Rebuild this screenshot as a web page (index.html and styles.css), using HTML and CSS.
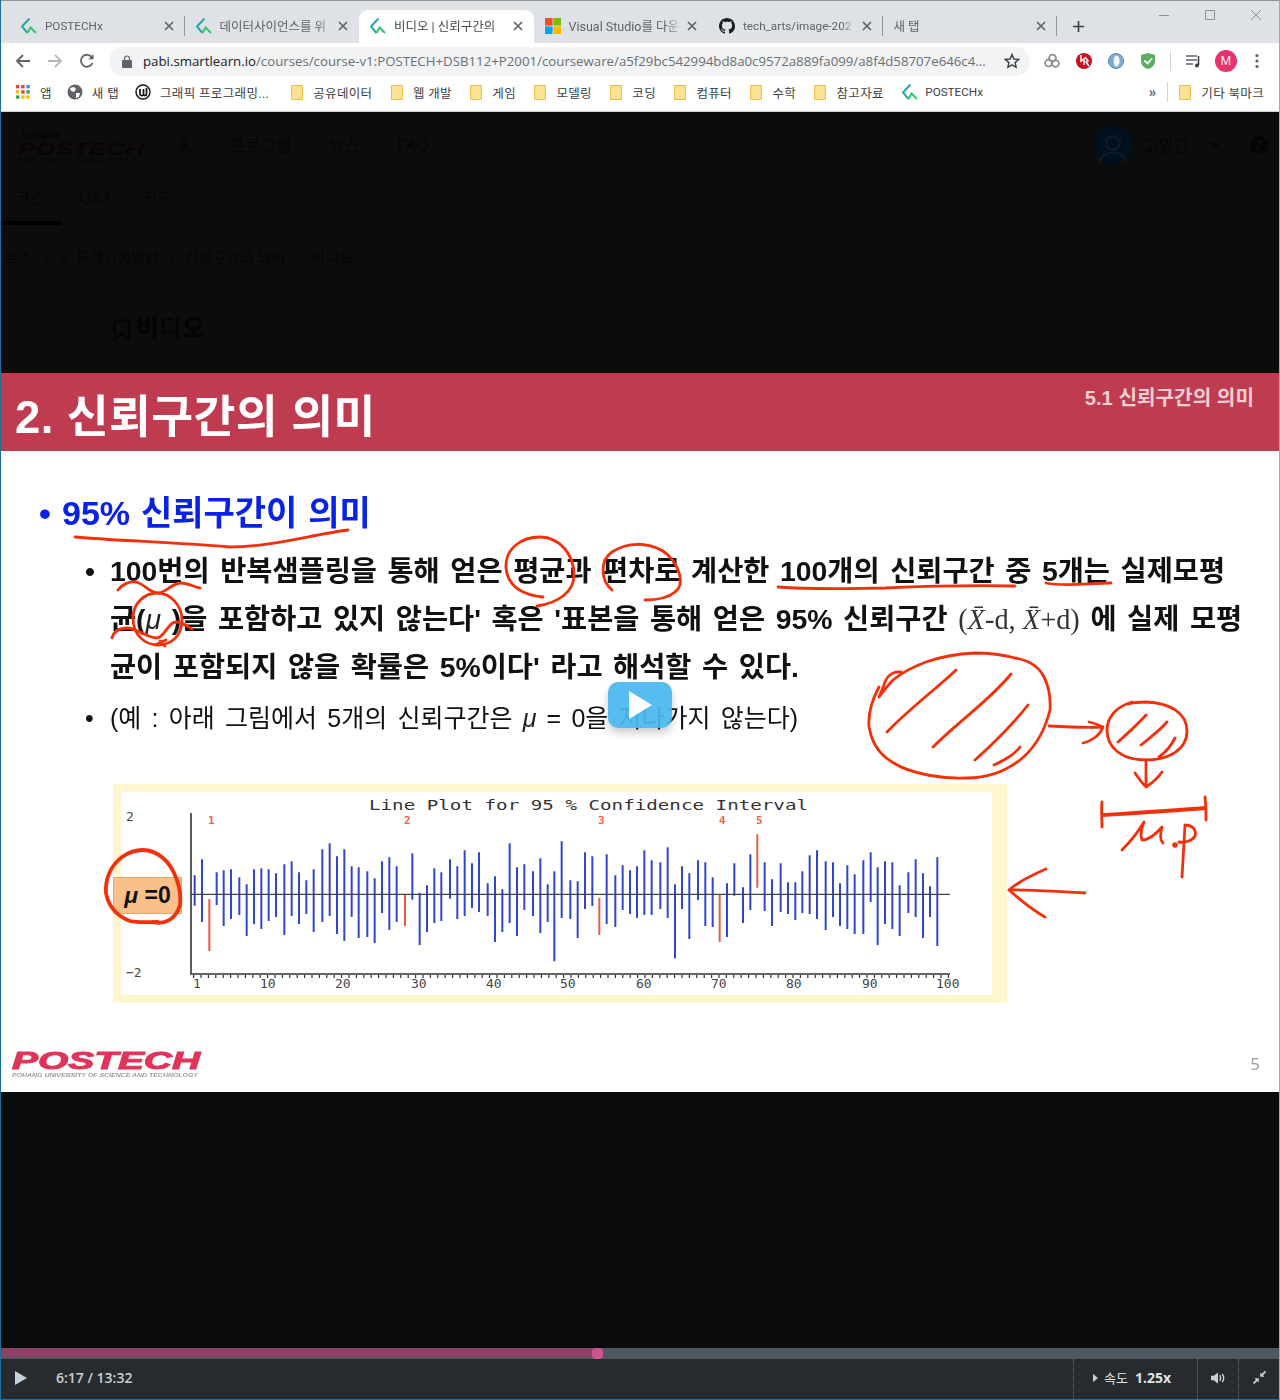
FILE: index.html
```html
<!DOCTYPE html>
<html lang="ko">
<head>
    <meta charset="UTF-8">
    <title>비디오 | 신뢰구간의 의미</title>
    <link rel="stylesheet" href="styles.css">
</head>
<body>

<svg class="defs" width="0" height="0">
    <symbol id="px" viewBox="0 0 16 16">
        <path d="M8.5 .5 1 8.5 6.5 15" fill="none" stroke="#2aa7a4" stroke-width="2"/>
        <path d="M6.5 15 9.5 9.5 15 15" fill="none" stroke="#35c66f" stroke-width="2"/>
    </symbol>
    <symbol id="folder" viewBox="0 0 12 15">
        <path d="M.5.5H11.5V14.5H.5Z" fill="#fde293" stroke="#e5c04d"/>
    </symbol>
    <symbol id="x" viewBox="0 0 10 10">
        <path d="M1 1 9 9M9 1 1 9" stroke="#5f6368" stroke-width="1.7"/>
    </symbol>
</svg>

<header class="chrome">
    <div class="tabstrip">
        <div class="tab">
            <svg class="favicon"><use href="#px"/></svg>
            <span class="tab-title latin">POSTECHx</span>
            <svg class="tab-x"><use href="#x"/></svg>
        </div>
        <div class="tab">
            <svg class="favicon"><use href="#px"/></svg>
            <span class="tab-title">데이터사이언스를 위</span>
            <svg class="tab-x"><use href="#x"/></svg>
        </div>
        <div class="tab active">
            <svg class="favicon"><use href="#px"/></svg>
            <span class="tab-title">비디오 | 신뢰구간의</span>
            <svg class="tab-x"><use href="#x"/></svg>
        </div>
        <div class="tab no-sep">
            <svg class="favicon" viewBox="0 0 16 16">
                <rect width="7.6" height="7.6" fill="#f25022"/>
                <rect x="8.4" width="7.6" height="7.6" fill="#7fba00"/>
                <rect y="8.4" width="7.6" height="7.6" fill="#00a4ef"/>
                <rect x="8.4" y="8.4" width="7.6" height="7.6" fill="#ffb900"/>
            </svg>
            <span class="tab-title">Visual Studio를 다운</span>
            <svg class="tab-x"><use href="#x"/></svg>
        </div>
        <div class="tab">
            <svg class="favicon" viewBox="0 0 16 16">
                <path fill="#1b1f23" d="M8 0C3.58 0 0 3.58 0 8c0 3.54 2.29 6.53 5.47 7.59.4.07.55-.17.55-.38 0-.19-.01-.82-.01-1.49-2.01.37-2.53-.49-2.69-.94-.09-.23-.48-.94-.82-1.13-.28-.15-.68-.52-.01-.53.63-.01 1.08.58 1.23.82.72 1.21 1.87.87 2.33.66.07-.52.28-.87.51-1.07-1.78-.2-3.64-.89-3.64-3.95 0-.87.31-1.59.82-2.15-.08-.2-.36-1.02.08-2.12 0 0 .67-.21 2.2.82.64-.18 1.32-.27 2-.27.68 0 1.36.09 2 .27 1.53-1.04 2.2-.82 2.2-.82.44 1.1.16 1.92.08 2.12.51.56.82 1.27.82 2.15 0 3.07-1.87 3.75-3.65 3.95.29.25.54.73.54 1.48 0 1.07-.01 1.93-.01 2.2 0 .21.15.46.55.38A8.013 8.013 0 0016 8c0-4.42-3.58-8-8-8z"/>
            </svg>
            <span class="tab-title latin">tech_arts/image-202</span>
            <svg class="tab-x"><use href="#x"/></svg>
        </div>
        <div class="tab last">
            <span class="tab-title">새 탭</span>
            <svg class="tab-x"><use href="#x"/></svg>
        </div>
        <svg class="new-tab" viewBox="0 0 14 14"><path d="M7 1V13M1 7H13" stroke="#3c4043" stroke-width="1.8"/></svg>
        <div class="win-controls">
            <svg viewBox="0 0 12 12"><path d="M1 6.5H11" stroke="#8b9095"/></svg>
            <svg viewBox="0 0 12 12"><path d="M1.5 1.5H10.5V10.5H1.5Z" fill="none" stroke="#8b9095"/></svg>
            <svg viewBox="0 0 12 12"><path d="M1 1 11 11M11 1 1 11" stroke="#8b9095"/></svg>
        </div>
    </div>

    <div class="toolbar">
        <svg class="tool" viewBox="0 0 16 16"><path d="M15 8H2M8 2 2 8 8 14" fill="none" stroke="#5f6368" stroke-width="1.8"/></svg>
        <svg class="tool" viewBox="0 0 16 16"><path d="M1 8H14M8 2 14 8 8 14" fill="none" stroke="#b4b7bb" stroke-width="1.8"/></svg>
        <svg class="tool" viewBox="0 0 16 16"><path d="M13.5 10A6 6 0 1 1 13 4.5" fill="none" stroke="#5f6368" stroke-width="1.8"/><path d="M14.5 1V6.2H9.3Z" fill="#5f6368"/></svg>
        <div class="omnibox">
            <svg class="lock" viewBox="0 0 10 13"><path d="M2.5 5V3.5a2.5 2.5 0 0 1 5 0V5" fill="none" stroke="#5f6368" stroke-width="1.2"/><rect y="5" width="10" height="8" rx="1" fill="#5f6368"/></svg>
            <span class="url"><b>pabi.smartlearn.io</b>/courses/course-v1:POSTECH+DSB112+P2001/courseware/a5f29bc542994bd8a0c9572a889fa099/a8f4d58707e646c4...</span>
            <svg class="star" viewBox="0 0 16 16"><path d="M8 1.5 9.9 6 14.8 6.4 11.1 9.6 12.2 14.4 8 11.9 3.8 14.4 4.9 9.6 1.2 6.4 6.1 6Z" fill="none" stroke="#3c4043" stroke-width="1.4"/></svg>
        </div>
        <div class="ext-row">
            <svg class="ext" viewBox="0 0 18 18"><g fill="none" stroke="#8c9094" stroke-width="1.8"><circle cx="5.5" cy="11" r="3.4"/><circle cx="12.5" cy="11.5" r="3.4"/><circle cx="9.5" cy="6" r="3.4"/></g></svg>
            <svg class="ext" viewBox="0 0 18 18"><circle cx="9" cy="9" r="8" fill="#c8101e"/><path d="M6 3V9L9 7V13M10 5 13 9 11 10 14 14" fill="none" stroke="#fff" stroke-width="1.5"/></svg>
            <svg class="ext" viewBox="0 0 18 18"><circle cx="9" cy="9" r="7.6" fill="#7fa8d2"/><ellipse cx="9.6" cy="9" rx="3" ry="5.6" fill="#f4f8fc"/><circle cx="9" cy="9" r="7.6" fill="none" stroke="#4a7fb8" stroke-width=".8"/></svg>
            <svg class="ext" viewBox="0 0 18 18"><path d="M2 3 9 1 16 3V9C16 13 13 16 9 17 5 16 2 13 2 9Z" fill="#5cae60"/><path d="M5.5 8.5 8.5 11.5 13 6.5" fill="none" stroke="#fff" stroke-width="1.8"/></svg>
            <i class="ext-sep"></i>
            <svg class="ext" viewBox="0 0 18 18"><path d="M2 4H13M2 8H13M2 12H9" stroke="#5f6368" stroke-width="1.6"/><path d="M14.5 4V13" stroke="#3c4043" stroke-width="1.6"/><circle cx="13" cy="13.5" r="2" fill="#3c4043"/></svg>
            <span class="avatar">M</span>
            <svg class="dots" viewBox="0 0 4 16"><circle cx="2" cy="2.5" r="1.6" fill="#5f6368"/><circle cx="2" cy="8" r="1.6" fill="#5f6368"/><circle cx="2" cy="13.5" r="1.6" fill="#5f6368"/></svg>
        </div>
    </div>

    <nav class="bookmarks">
        <span class="bm b-apps">
            <svg class="bm-apps" viewBox="0 0 14 14">
                <g fill="#ea4335"><rect width="3.4" height="3.4"/><rect x="5.2" width="3.4" height="3.4"/></g>
                <rect x="10.4" width="3.4" height="3.4" fill="#4285f4"/>
                <rect y="5.2" width="3.4" height="3.4" fill="#fbbc05"/>
                <rect x="5.2" y="5.2" width="3.4" height="3.4" fill="#ea4335"/>
                <rect x="10.4" y="5.2" width="3.4" height="3.4" fill="#34a853"/>
                <rect y="10.4" width="3.4" height="3.4" fill="#34a853"/>
                <rect x="5.2" y="10.4" width="3.4" height="3.4" fill="#fbbc05"/>
                <rect x="10.4" y="10.4" width="3.4" height="3.4" fill="#fbbc05"/>
            </svg>앱</span>
        <span class="bm b-tab">
            <svg class="bm-round" viewBox="0 0 16 16"><circle cx="8" cy="8" r="7.5" fill="#5f6368"/><path d="M3 4 7 3 9 5 7 8 4 7ZM9 9 13 9 12 13 9 14Z" fill="#fff"/></svg>새 탭</span>
        <span class="bm b-long">
            <svg class="bm-round" viewBox="0 0 16 16"><circle cx="8" cy="8" r="7" fill="#fff" stroke="#111" stroke-width="1.4"/><path d="M5 5V10C5 12 8 12 8.5 10.5V5M8.5 10.5C9 12 11.5 12 11.5 10V4" fill="none" stroke="#111" stroke-width="1.7"/></svg>그래픽 프로그래밍...</span>
        <span class="bm"><svg class="bm-folder"><use href="#folder"/></svg>공유데이터</span>
        <span class="bm"><svg class="bm-folder"><use href="#folder"/></svg>웹 개발</span>
        <span class="bm"><svg class="bm-folder"><use href="#folder"/></svg>게임</span>
        <span class="bm"><svg class="bm-folder"><use href="#folder"/></svg>모델링</span>
        <span class="bm"><svg class="bm-folder"><use href="#folder"/></svg>코딩</span>
        <span class="bm"><svg class="bm-folder"><use href="#folder"/></svg>컴퓨터</span>
        <span class="bm"><svg class="bm-folder"><use href="#folder"/></svg>수학</span>
        <span class="bm"><svg class="bm-folder"><use href="#folder"/></svg>참고자료</span>
        <span class="bm b-latin"><svg class="bm-px"><use href="#px"/></svg>POSTECHx</span>
        <span class="bm-more">»</span>
        <i class="bm-sep"></i>
        <span class="bm b-last"><svg class="bm-folder"><use href="#folder"/></svg>기타 북마크</span>
    </nav>
</header>

<main class="viewport">
    <section class="dim-page">
        <div class="dim-nav">
            <svg class="dim-logo" viewBox="0 0 130 40">
                <text class="dim-logo-top" x="3" y="12">지식창출대학</text>
                <text class="dim-logo-main" x="0" y="29" textLength="126" lengthAdjust="spacingAndGlyphs">POSTECH</text>
                <text class="dim-logo-sub" x="0" y="36" textLength="122" lengthAdjust="spacingAndGlyphs">POHANG UNIVERSITY OF SCIENCE AND TECHNOLOGY</text>
            </svg>
            <ul class="dim-menu">
                <li>홈</li>
                <li>프로그램</li>
                <li>뉴스</li>
                <li>FAQ</li>
            </ul>
            <div class="dim-user">
                <svg class="dim-avatar" viewBox="0 0 38 38">
                    <circle cx="19" cy="19" r="19" fill="#00101e"/>
                    <circle cx="19" cy="17" r="7" fill="none" stroke="#0f1b24" stroke-width="2.4"/>
                    <path d="M6 36C7 28 13 27 19 27S31 28 32 36" fill="none" stroke="#0f1b24" stroke-width="2.4"/>
                </svg>
                <span class="dim-name">고영인</span>
                <i class="dim-caret"></i>
                <svg class="dim-globe" viewBox="0 0 18 18"><circle cx="9" cy="9" r="9" fill="#050505"/><path d="M9 3 13 5 11 9 8 8ZM5 10 9 12 7 15Z" fill="#0f0f0f"/></svg>
            </div>
        </div>
        <ul class="dim-tabs">
            <li class="on">코스</li>
            <li>Q&amp;A</li>
            <li>진도</li>
        </ul>
        <div class="dim-crumbs">코스 <em>›</em> V. 통계검정방법 <em>›</em> 신뢰구간의 의미 <em>›</em> 비디오</div>
        <h2 class="dim-title">
            <svg viewBox="0 0 16 20"><path d="M1.5 1.5H14.5V18.5L8 13 1.5 18.5Z" fill="none" stroke="#040404" stroke-width="2.4"/></svg>비디오
        </h2>
    </section>

    <section class="slide">
        <div class="slide-head">
            <h1>2. 신뢰구간의 의미</h1>
            <span>5.1 신뢰구간의 의미</span>
        </div>
        <div class="slide-body">
            <p class="lv1"><i>•</i>95% 신뢰구간이 의미</p>
            <p class="lv2 first"><i>•</i>100번의 반복샘플링을 통해 얻은 평균과 편차로 계산한 100개의 신뢰구간 중 5개는 실제모평</p>
            <p class="lv2">균(<em class="math">μ</em> )을 포함하고 있지 않는다' 혹은 '표본을 통해 얻은 95% 신뢰구간 <span class="formula">(<em>X̄</em>-d, <em>X̄</em>+d)</span> 에 실제 모평</p>
            <p class="lv2">균이 포함되지 않을 확률은 5%이다' 라고 해석할 수 있다.</p>
            <p class="lv3"><i>•</i>(예 : 아래 그림에서 5개의 신뢰구간은 <em class="math">μ</em> = 0을 지나가지 않는다)</p>
            <div class="plot">
                <svg class="plot-svg" viewBox="121 792 871 203">
                    <text class="plot-title" x="369" y="810" textLength="439" lengthAdjust="spacingAndGlyphs">Line Plot for 95 % Confidence Interval</text>
                    <g class="plot-label">
                        <text x="126" y="821">2</text>
                        <text x="126" y="977">−2</text>
                        <text x="193" y="988">1</text>
                        <text x="260" y="988">10</text>
                        <text x="335" y="988">20</text>
                        <text x="411" y="988">30</text>
                        <text x="486" y="988">40</text>
                        <text x="560" y="988">50</text>
                        <text x="636" y="988">60</text>
                        <text x="711" y="988">70</text>
                        <text x="786" y="988">80</text>
                        <text x="862" y="988">90</text>
                        <text x="936" y="988">100</text>
                    </g>
                    <g class="plot-red">
                        <text x="208" y="824">1</text>
                        <text x="404" y="824">2</text>
                        <text x="598" y="824">3</text>
                        <text x="719" y="824">4</text>
                        <text x="756" y="824">5</text>
                    </g>
                    <g transform="translate(100 780) scale(.33333)" fill="none" stroke-width="6">
                        <path stroke="#2f47cf" d="M284 286V377M306 238V426M350 277V375M371 271V438M393 268V417M418 292V405M440 313V468M462 268V432M484 265V447M506 268V423M528 280V411M553 253V465M575 244V408M597 277V432M619 301V402M641 268V456M667 208V426M689 190V408M711 229V462M733 208V483M755 259V411M776 262V474M802 274V471M824 295V489M846 244V399M868 232V450M890 259V426M937 220V359M959 338V495M981 316V456M1003 265V429M1024 277V423M1050 238V356M1072 259V417M1094 211V408M1116 250V384M1137 217V396M1163 310V408M1185 289V486M1207 328V456M1229 190V429M1251 262V468M1273 253V390M1299 274V408M1321 235V459M1343 313V426"/>
                        <path stroke="#ea5a42" d="M328 357V513M915 343V438"/>
                    </g>
                    <g transform="translate(540 780) scale(.33333)" fill="none" stroke-width="6">
                        <path stroke="#2f47cf" d="M43 274V544M65 184V414M91 301V417M113 304V474M135 217V387M157 229V378M200 223V432M226 286V441M248 256V390M270 271V402M291 259V414M313 211V405M335 241V405M361 247V387M383 202V414M405 313V535M426 259V387M448 280V477M474 241V360M496 247V438M518 292V441M561 310V471M583 250V347M609 322V429M631 223V390M674 247V393M696 298V438M722 250V396M744 307V402M766 307V420M787 274V399M809 226V402M831 211V417M857 244V450M879 247V411M900 310V438M922 256V447M944 283V462M970 241V462M992 217V366M1013 262V495M1035 244V432M1057 247V447M1079 316V468M1105 277V399M1127 238V411M1149 280V474M1170 319V411M1192 232V498"/>
                        <path stroke="#e0604a" d="M178 353V465M539 343V486M652 163V323"/>
                    </g>
                    <path class="plot-axis" d="M191 813V974H950"/>
                    <path class="plot-zero" d="M190 894.3H950"/>
                    <path class="plot-ticks" d="M193 976.5H950"/>
                </svg>
            </div>
            <span class="mu-tag"><em>μ</em> =0</span>
        </div>
        <div class="slide-foot">
            <svg class="slide-logo" viewBox="0 -6 192 34">
                <text class="logo-main" x="0" y="17" textLength="188" lengthAdjust="spacingAndGlyphs">POSTECH</text>
                <text class="logo-sub" x="0" y="25" textLength="186" lengthAdjust="spacingAndGlyphs">POHANG UNIVERSITY OF SCIENCE AND TECHNOLOGY</text>
            </svg>
            <span class="page-no">5</span>
        </div>

        <!-- pen marks drawn over the slide, coords are page coords -->
        <svg class="ink" viewBox="0 373 1280 719">
            <path d="M75 537C120 541 170 542 229 547C270 547 310 535 348 530"/>
            <path d="M543 597C525 595 508 588 506 568C505 548 522 537 540 537C560 537 574 555 574 575C574 592 558 603 537 606"/>
            <path d="M612 590C600 580 600 560 612 552C630 540 655 543 668 555C680 567 685 585 675 592C668 598 655 600 645 600"/>
            <path d="M118 590C122 584 130 581 136 582C145 584 150 594 159 593C167 592 172 583 181 583C188 583 194 587 200 588"/>
            <path d="M133 618C133 603 145 593 157 593C170 593 182 605 182 620C182 635 172 645 158 645C145 645 133 635 133 618"/>
            <path d="M112 638C114 631 120 628 127 628C137 628 147 638 157 638C165 637 168 622 176 622C182 622 187 626 192 629"/>
            <path d="M155 645 166 640M160 641 165 646"/>
            <path d="M778 587C820 590 860 588 885 588C930 586 975 585 1015 586"/>
            <path d="M1046 583C1065 587 1090 583 1111 583"/>

            <path d="M901 672C895 671 888 674 885 682C883 689 880 694 879 697M879 687C872 700 868 715 869 727C872 745 880 755 892 762C912 775 945 779 967 778C990 778 1007 770 1020 760C1035 748 1045 730 1050 710C1051 695 1048 685 1044 677C1038 665 1027 660 1015 658C1000 654 988 653 975 653C955 654 940 657 926 662C910 668 899 675 893 680C888 685 883 692 879 697"/>
            <path d="M887 732C910 708 935 690 956 670M933 747C960 720 990 700 1011 674M975 760C995 742 1012 725 1028 705M994 765C1005 760 1014 755 1020 747"/>
            <path d="M1049 726C1067 727 1085 728 1103 727M1089 722C1094 723 1099 725 1103 727C1100 735 1092 741 1083 743"/>
            <path d="M1132 702C1118 706 1107 716 1107 730C1107 748 1122 760 1146 760C1168 760 1187 750 1187 731C1187 713 1170 703 1146 702C1140 702 1135 702 1128 704"/>
            <path d="M1118 742C1128 733 1138 724 1146 715M1141 745C1150 738 1160 730 1167 722M1159 757C1166 752 1171 746 1175 738"/>
            <path d="M1146 760V787M1135 773C1139 779 1143 784 1146 787C1152 783 1158 778 1162 772"/>
            <path class="ink-thick" d="M1103 815C1135 813 1170 811 1205 808"/>
            <path d="M1102 802C1101 810 1102 820 1102 827M1205 797C1206 805 1206 812 1206 820"/>
            <path d="M1122 850C1130 842 1138 832 1144 822C1141 830 1140 836 1142 840C1148 840 1156 834 1162 827C1160 834 1160 840 1163 843M1185 825 1182 877M1185 825C1192 825 1197 830 1195 836C1192 841 1185 843 1179 842"/>
            <circle class="ink-dot" cx="1175" cy="845" r="1.4"/>
            <path d="M1009 890C1030 889 1058 892 1085 893M1046 869C1032 875 1018 882 1009 890C1018 898 1032 910 1045 917"/>
            <path class="ink-thick" d="M153 922C165 925 176 919 180 905C182 890 175 868 163 858C150 847 135 848 122 857C110 866 105 880 106 893C108 905 116 916 130 921C138 923 148 922 158 922"/>
        </svg>

        <div class="play-btn">
            <svg viewBox="0 0 25 30"><path d="M1 1 24 15 1 29Z" fill="#fff"/></svg>
        </div>
    </section>

    <section class="black-area"></section>

    <div class="progress">
        <div class="progress-fill"></div>
        <span class="progress-handle"></span>
    </div>
    <div class="controls">
        <svg class="ctl-play" viewBox="0 0 12 14"><path d="M0 0 12 7 0 14Z" fill="#c5d2da"/></svg>
        <span class="ctl-time">6:17 / 13:32</span>
        <div class="ctl-speed"><i></i>속도 <b>1.25x</b></div>
        <div class="ctl-box">
            <svg viewBox="0 0 16 14"><path d="M0 4.5H3L7.5 1V13L3 9.5H0Z" fill="#c5d2da"/><path d="M9.5 4C10.5 6 10.5 8 9.5 10M12 2.5C14 5.5 14 8.5 12 11.5" fill="none" stroke="#c5d2da" stroke-width="1.5"/></svg>
        </div>
        <div class="ctl-box small">
            <svg viewBox="0 0 14 14"><path d="M13.5 .5 9 5M.5 13.5 5 9" stroke="#c5d2da" stroke-width="2"/><path d="M7.8 1.5V6.2H12.5ZM1.5 7.8H6.2V12.5Z" fill="#c5d2da"/></svg>
        </div>
    </div>
</main>

</body>
</html>
```

FILE: styles.css
```css
* {
    box-sizing: border-box;
}
html, body {
    margin: 0;
    padding: 0;
}
body {
    width: 1280px;
    height: 1400px;
    overflow: hidden;
    background: #fff;
    border-left: 1px solid #1f6f9c;
    border-right: 1px solid #a5a9ad;
    border-bottom: 1px solid #1f6f9c;
    font-family: "Open Sans", "Noto Sans CJK KR", sans-serif;
    color: #3c4043;
}
ul {
    list-style: none;
    margin: 0;
    padding: 0;
}
.defs {
    position: absolute;
}

/* browser chrome */
.chrome {
    height: 112px;
}
.tabstrip {
    display: flex;
    align-items: flex-end;
    height: 43px;
    padding-left: 9px;
    background: #dee1e6;
    border-top: 1px solid #8c959d;
    position: relative;
}
.tab {
    display: flex;
    align-items: center;
    width: 174.5px;
    height: 33px;
    padding: 0 11px 2px 11px;
    font-family: Roboto, "Noto Sans CJK KR", sans-serif;
    font-size: 12.5px;
    color: #5f6368;
    position: relative;
}
.tab::after {
    content: "";
    position: absolute;
    right: 0;
    top: 6px;
    height: 20px;
    width: 1px;
    background: #8f969c;
}
.tab.active {
    background: #fff;
    border-radius: 9px 9px 0 0;
    color: #45494d;
}
.tab.active::after,
.tab:nth-child(2)::after,
.no-sep::after {
    display: none;
}
.favicon {
    width: 16px;
    height: 16px;
    flex: none;
    margin-right: 8px;
}
.tab-title {
    flex: 1;
    white-space: nowrap;
    -webkit-mask-image: linear-gradient(90deg, #000 85%, transparent 100%);
    mask-image: linear-gradient(90deg, #000 85%, transparent 100%);
}
.tab-title.latin {
    font-size: 11.7px;
}
.tab-x {
    width: 10px;
    height: 10px;
    flex: none;
    margin-left: 4px;
}
.new-tab {
    width: 13px;
    height: 13px;
    margin: 0 0 10px 15px;
}
.win-controls {
    position: absolute;
    right: 17px;
    top: 8px;
    display: flex;
    gap: 34px;
}
.win-controls svg {
    width: 12px;
    height: 12px;
}

.toolbar {
    display: flex;
    align-items: center;
    height: 36px;
    padding-left: 14px;
    background: #fff;
}
.tool {
    width: 16px;
    height: 16px;
    margin-right: 16px;
}
.omnibox {
    display: flex;
    align-items: center;
    width: 921px;
    height: 29px;
    margin-left: -2px;
    padding: 0 10px 0 13px;
    background: #f1f3f4;
    border-radius: 15px;
}
.lock {
    width: 10px;
    height: 13px;
    flex: none;
    margin-right: 11px;
}
.url {
    flex: 1;
    font-size: 13.25px;
    color: #6a6e72;
    white-space: nowrap;
}
.url b {
    font-weight: 400;
    color: #202124;
}
.star {
    width: 16px;
    height: 16px;
    flex: none;
}
.ext-row {
    display: flex;
    align-items: center;
    margin-left: 13px;
}
.ext {
    width: 18px;
    height: 18px;
    margin-right: 14px;
}
.ext-sep {
    width: 1px;
    height: 20px;
    margin: 0 13px 0 -1px;
    background: #cfd2d5;
}
.avatar {
    width: 22px;
    height: 22px;
    margin-right: 18px;
    margin-left: -1px;
    border-radius: 50%;
    background: #e8336d;
    color: #fff;
    font-size: 12px;
    line-height: 22px;
    text-align: center;
}
.dots {
    width: 4px;
    height: 16px;
}

.bookmarks {
    display: flex;
    align-items: center;
    height: 33px;
    padding: 0 0 6px 15px;
    background: #fff;
    font-family: Roboto, "Noto Sans CJK KR", sans-serif;
    font-size: 12.5px;
    color: #3c4043;
    border-bottom: 1px solid #cfd2d5;
}
.bm {
    display: flex;
    align-items: center;
    margin-right: 18.4px;
    white-space: nowrap;
    letter-spacing: .35px;
}
.b-apps {
    margin-right: 15px;
}
.b-tab {
    margin-right: 16px;
}
.b-long {
    margin-right: 22px;
}
.b-latin {
    font-size: 11.7px;
    letter-spacing: 0;
}
.b-last {
    margin-right: 15px;
}
.bm-apps {
    width: 14px;
    height: 14px;
    margin-right: 10px;
}
.bm-round {
    width: 16px;
    height: 16px;
    margin-right: 9px;
}
.bm-folder {
    width: 12px;
    height: 15px;
    margin-right: 10px;
}
.bm-px {
    width: 16px;
    height: 16px;
    margin-right: 7px;
}
.bm-more {
    margin-left: auto;
    font-size: 15px;
    font-weight: 700;
    color: #5f6368;
}
.bm-sep {
    width: 1px;
    height: 20px;
    margin: 0 11px;
    background: #cfd2d5;
}

/* the page behind the video popup, almost black */
.viewport {
    background: #0c0c0d;
    position: relative;
}
.dim-page {
    height: 261px;
    overflow: hidden;
    color: #050505;
    font-size: 16.5px;
}
.dim-nav {
    display: flex;
    align-items: center;
    height: 66px;
    padding: 0 0 0 17px;
}
.dim-logo {
    width: 130px;
    height: 40px;
    margin-right: 29px;
    margin-top: 2px;
}
.dim-logo-top {
    font: 700 7px "Noto Sans CJK KR", sans-serif;
    fill: #050303;
}
.dim-logo-main {
    font: italic 700 17px "Liberation Sans", sans-serif;
    fill: #0a0203;
}
.dim-logo-sub {
    font: italic 4.5px "Liberation Sans", sans-serif;
    fill: #050505;
}
.dim-menu {
    display: flex;
    gap: 38px;
}
.dim-user {
    display: flex;
    align-items: center;
    margin-left: auto;
    padding-right: 11px;
}
.dim-avatar {
    width: 38px;
    height: 38px;
}
.dim-name {
    margin: 0 21px 0 11px;
}
.dim-caret {
    margin: 6px 30px 0 0;
    border: 5px solid transparent;
    border-top-color: #030303;
}
.dim-globe {
    width: 18px;
    height: 18px;
}
.dim-tabs {
    display: flex;
    height: 47px;
    padding-top: 8px;
    font-size: 15.5px;
}
.dim-tabs li {
    width: 64px;
    padding: 0 0 0 18px;
}
.dim-tabs .on {
    width: 60px;
    height: 39px;
    padding-left: 15px;
    border-bottom: 4px solid #000;
}
.dim-crumbs {
    padding: 21px 0 0 4px;
    font-size: 15px;
}
.dim-crumbs em {
    margin: 0 7px;
    font-style: normal;
}
.dim-title {
    display: flex;
    align-items: center;
    margin: 44px 0 0 112px;
    font-size: 25px;
    line-height: 32px;
    color: #040404;
}
.dim-title svg {
    width: 18px;
    height: 22px;
    margin: 6px 5px 0 0;
}

/* video frame: the slide */
.slide {
    height: 719px;
    background: #fff;
    position: relative;
    overflow: hidden;
    font-family: "Liberation Sans", "Noto Sans CJK KR", sans-serif;
    color: #111;
}
.slide-head {
    display: flex;
    justify-content: space-between;
    height: 78px;
    padding: 0 25px 0 14px;
    background: #bf3b4f;
    color: #fff;
}
.slide-head h1 {
    margin: 0;
    font-size: 45.5px;
    line-height: 90px;
    letter-spacing: .4px;
    font-weight: 700;
    filter: blur(.3px);
}
.slide-head span {
    font-size: 20.2px;
    line-height: 50px;
    font-weight: 700;
    color: #f3cfd4;
}
.slide-body {
    position: relative;
    height: 581px;
    padding: 35px 0 0 38px;
    filter: blur(.35px);
}
.slide-body p {
    margin: 0;
    white-space: nowrap;
    position: relative;
}
.slide-body p i {
    position: absolute;
    font-style: normal;
}
.lv1 {
    padding-left: 23px;
    height: 52px;
    font-size: 34px;
    line-height: 54px;
    font-weight: 700;
    word-spacing: 1.5px;
    color: #0a22e6;
}
.lv1 i {
    left: 0;
}
.lv2 {
    padding-left: 71px;
    height: 48px;
    font-size: 28.4px;
    line-height: 48px;
    font-weight: 700;
    word-spacing: 2.7px;
}
.lv2.first {
    margin-top: 9px;
}
.lv2 i {
    left: 46px;
}
.lv3 {
    padding-left: 71px;
    height: 56px;
    font-size: 25px;
    line-height: 54px;
    font-weight: 400;
    word-spacing: 3.3px;
}
.lv3 i {
    left: 46px;
}
.math {
    font-family: "Liberation Sans", sans-serif;
    font-weight: 400;
    color: #222;
}
.formula {
    font-family: "Liberation Serif", serif;
    font-weight: 400;
    word-spacing: 0;
    color: #333;
}
.plot {
    width: 894px;
    height: 219px;
    margin: 37px 0 0 74px;
    background: #fff;
    border: solid #fff6cf;
    border-width: 8px 15px 8px 8px;
}
.plot-svg {
    display: block;
    width: 871px;
    height: 203px;
}
.plot-title {
    font: 14px "DejaVu Sans Mono", monospace;
    fill: #333;
}
.plot-label text {
    font: 13px "DejaVu Sans Mono", monospace;
    fill: #444;
}
.plot-red text {
    font: 700 11px "DejaVu Sans Mono", monospace;
    fill: #f0604c;
}
.plot-axis {
    fill: none;
    stroke: #333;
    stroke-width: 1.6;
}
.plot-zero {
    fill: none;
    stroke: #444;
    stroke-width: 1.3;
}
.plot-ticks {
    fill: none;
    stroke: #333;
    stroke-width: 3;
    stroke-dasharray: 1.2 6.2;
}
.mu-tag {
    position: absolute;
    left: 112px;
    top: 426px;
    width: 69px;
    height: 37px;
    background: #f9c08c;
    border: 1px solid #e8a566;
    font-size: 23px;
    line-height: 35px;
    font-weight: 700;
    text-align: center;
    color: #111;
}
.slide-foot {
    display: flex;
    justify-content: space-between;
    align-items: flex-start;
    height: 60px;
    position: absolute;
    left: 0;
    right: 0;
    bottom: 0;
    padding: 14px 19px 0 11px;
    filter: blur(.4px);
}
.slide-logo {
    width: 192px;
    height: 34px;
}
.logo-main {
    font: italic 700 24px "Liberation Sans", sans-serif;
    fill: #e0345a;
    stroke: #e0345a;
    stroke-width: 1;
}
.logo-sub {
    font: italic 700 6px "Liberation Sans", sans-serif;
    fill: #9a9a9a;
}
.page-no {
    margin-top: 6px;
    font: 17px "Open Sans", sans-serif;
    color: #9a9a9a;
    line-height: 24px;
}
.ink {
    position: absolute;
    left: -1px;
    top: 0;
    width: 1280px;
    height: 719px;
    fill: none;
    stroke: #f2310c;
    stroke-width: 2.8;
    stroke-linecap: round;
    stroke-linejoin: round;
    pointer-events: none;
}
.ink .ink-thick {
    stroke-width: 3.8;
}
.ink .ink-dot {
    fill: #f2310c;
}
.play-btn {
    position: absolute;
    left: 607px;
    top: 309px;
    width: 64px;
    height: 46px;
    display: flex;
    align-items: center;
    justify-content: center;
    border-radius: 10px;
    background: rgba(74, 184, 240, .93);
    box-shadow: 0 5px 8px rgba(0, 0, 0, .2);
}
.play-btn svg {
    width: 25px;
    height: 30px;
}

.black-area {
    height: 256px;
    background: #0a0b0c;
}
.progress {
    height: 11px;
    background: #4f5860;
    position: relative;
}
.progress-fill {
    width: 596px;
    height: 9px;
    background: #8f4165;
}
.progress-handle {
    position: absolute;
    left: 591px;
    top: 0;
    width: 11px;
    height: 11px;
    border-radius: 4px;
    background: #c9548f;
}
.controls {
    display: flex;
    align-items: center;
    height: 40px;
    background: #272b2e;
    color: #c9d0d6;
}
.ctl-play {
    width: 12px;
    height: 14px;
    margin: 0 0 2px 14px;
}
.ctl-time {
    margin: 0 0 3px 29px;
    font-size: 14px;
    font-weight: 600;
}
.ctl-speed {
    display: flex;
    align-items: center;
    width: 124px;
    height: 40px;
    margin-left: auto;
    padding: 0 0 3px 19px;
    border-left: 1px dotted #6a7075;
    font-size: 13px;
    color: #dfe3e6;
}
.ctl-speed i {
    border: 4px solid transparent;
    border-left: 5px solid #c5d2da;
    border-right: 0;
    margin-right: 6px;
}
.ctl-speed b {
    margin-left: 7px;
    font-size: 14px;
}
.ctl-box {
    display: flex;
    align-items: center;
    justify-content: center;
    width: 41px;
    height: 40px;
    padding-bottom: 3px;
    border-left: 1px dotted #6a7075;
}
.ctl-box svg {
    width: 15px;
    height: 14px;
}
.ctl-box.small {
    width: 41px;
}
.ctl-box.small svg {
    width: 13px;
    height: 13px;
}
```
